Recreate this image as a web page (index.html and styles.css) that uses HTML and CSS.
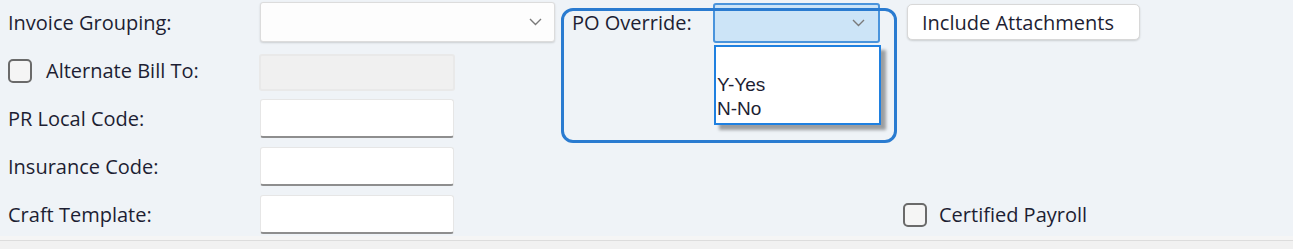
FILE: index.html
```html
<!DOCTYPE html>
<html>
<head>
    <title>Job Billing</title>
    <link rel="stylesheet" href="styles.css">
</head>
<body>
    <div class="form-grid">
        <label class="lbl">Invoice Grouping:</label>
        <div class="select wide">
            <span></span>
            <svg class="chev" width="13" height="8" viewBox="0 0 13 8"><polyline points="1,1 6.5,6.5 12,1" fill="none" stroke="#7a7a7a" stroke-width="1.4"/></svg>
        </div>
        <label class="lbl po-label">PO Override:</label>
        <div class="po-cell">
            <div class="select po-select">
                <span></span>
                <svg class="chev" width="13" height="8" viewBox="0 0 13 8"><polyline points="1,1 6.5,6.5 12,1" fill="none" stroke="#7a7a7a" stroke-width="1.4"/></svg>
            </div>
            <ul class="dropdown">
                <li>&nbsp;</li>
                <li>Y-Yes</li>
                <li>N-No</li>
            </ul>
        </div>
        <div class="btn-cell"><button class="btn">Include Attachments</button></div>

        <label class="lbl check-lbl"><span class="box"></span>Alternate Bill To:</label>
        <div class="input disabled"></div>
        <div></div><div></div><div></div>

        <label class="lbl">PR Local Code:</label>
        <div class="input"></div>
        <div></div><div></div><div></div>

        <label class="lbl">Insurance Code:</label>
        <div class="input"></div>
        <div></div><div></div><div></div>

        <label class="lbl">Craft Template:</label>
        <div class="input"></div>
        <div></div><div></div>
        <label class="lbl check-lbl payroll"><span class="box"></span>Certified Payroll</label>

        <!-- callout drawn round the PO Override field -->
        <div class="highlight"></div>
    </div>
    <div class="footer"></div>
</body>
</html>
```

FILE: styles.css
```css
body {
    margin: 0;
    background: #eff3f7;
    font-family: "Open Sans", "Noto Sans", sans-serif;
    font-size: 20px;
    color: #1d1e33;
    overflow: hidden;
}

.form-grid {
    position: relative;
    display: grid;
    grid-template-columns: 252px 295px 158px 167px 1fr;
    grid-template-rows: 40px 39px 39px 39px 39px;
    row-gap: 9px;
    padding: 2px 0 0 8px;
    height: 234px;
    box-sizing: border-box;
}

.lbl {
    display: flex;
    align-items: center;
    white-space: nowrap;
}

.check-lbl { gap: 14px; }

.box {
    display: inline-block;
    width: 20px;
    height: 20px;
    border: 2px solid #6a6a6a;
    border-radius: 5px;
    background: #f5f5f5;
}

.select {
    display: flex;
    align-items: center;
    justify-content: space-between;
    background: #fdfdfd;
    border: 1px solid #dcdcdc;
    border-radius: 3px;
    box-shadow: 0 1px 2px rgba(0, 0, 0, 0.15);
    padding: 0 12px 0 8px;
    box-sizing: border-box;
}

.wide { width: 295px; }

.input {
    width: 194px;
    background: #ffffff;
    border: 1px solid #e6e6e6;
    border-bottom: 2px solid #8e8e8e;
    border-radius: 3px;
    box-sizing: border-box;
}

.input.disabled {
    background: #f0f0f0;
    border: 2px solid #e9e9e9;
    width: 196px;
    margin-left: -1px;
    margin-top: 3px;
    height: 37px;
}

.po-label { padding-left: 17px; }

.po-cell { position: relative; }

.po-select {
    height: 40px;
    margin-top: 1px;
    background: #cce4f7;
    border: 2px solid #4a94dc;
    border-radius: 3px;
    box-shadow: none;
    padding-right: 13px;
}

.dropdown {
    position: absolute;
    top: 43px;
    left: 1px;
    width: 167px;
    height: 80px;
    margin: 0;
    padding: 2px 0 0 1px;
    list-style: none;
    background: #ffffff;
    border: 2px solid #1f80e0;
    box-sizing: border-box;
    box-shadow: 5px 5px 3px rgba(0, 0, 0, 0.35);
    font-family: "Liberation Sans", Arial, sans-serif;
    font-size: 19px;
    z-index: 2;
}

.dropdown li {
    height: 24px;
    line-height: 24px;
}

.btn-cell { padding-left: 27px; }

.btn {
    font-family: inherit;
    font-size: 20px;
    color: inherit;
    width: 233px;
    height: 36px;
    margin-top: 2px;
    background: #ffffff;
    border: 1px solid #d8d8d8;
    border-radius: 5px;
    box-shadow: 0 1px 2px rgba(0, 0, 0, 0.15);
    text-align: left;
    padding: 0 0 0 14px;
}

.payroll { padding-left: 23px; gap: 12px; }

.highlight {
    position: absolute;
    left: 561px;
    top: 8px;
    width: 336px;
    height: 135px;
    border: 3px solid #2a7bd0;
    border-radius: 12px;
    box-sizing: border-box;
    z-index: 3;
}

.footer {
    height: 15px;
    margin-top: 2px;
    background: #f1f1f1;
    border-top: 4px solid #f5f5f5;
    box-shadow: inset 0 1px 0 #dcdcdc;
}
```
